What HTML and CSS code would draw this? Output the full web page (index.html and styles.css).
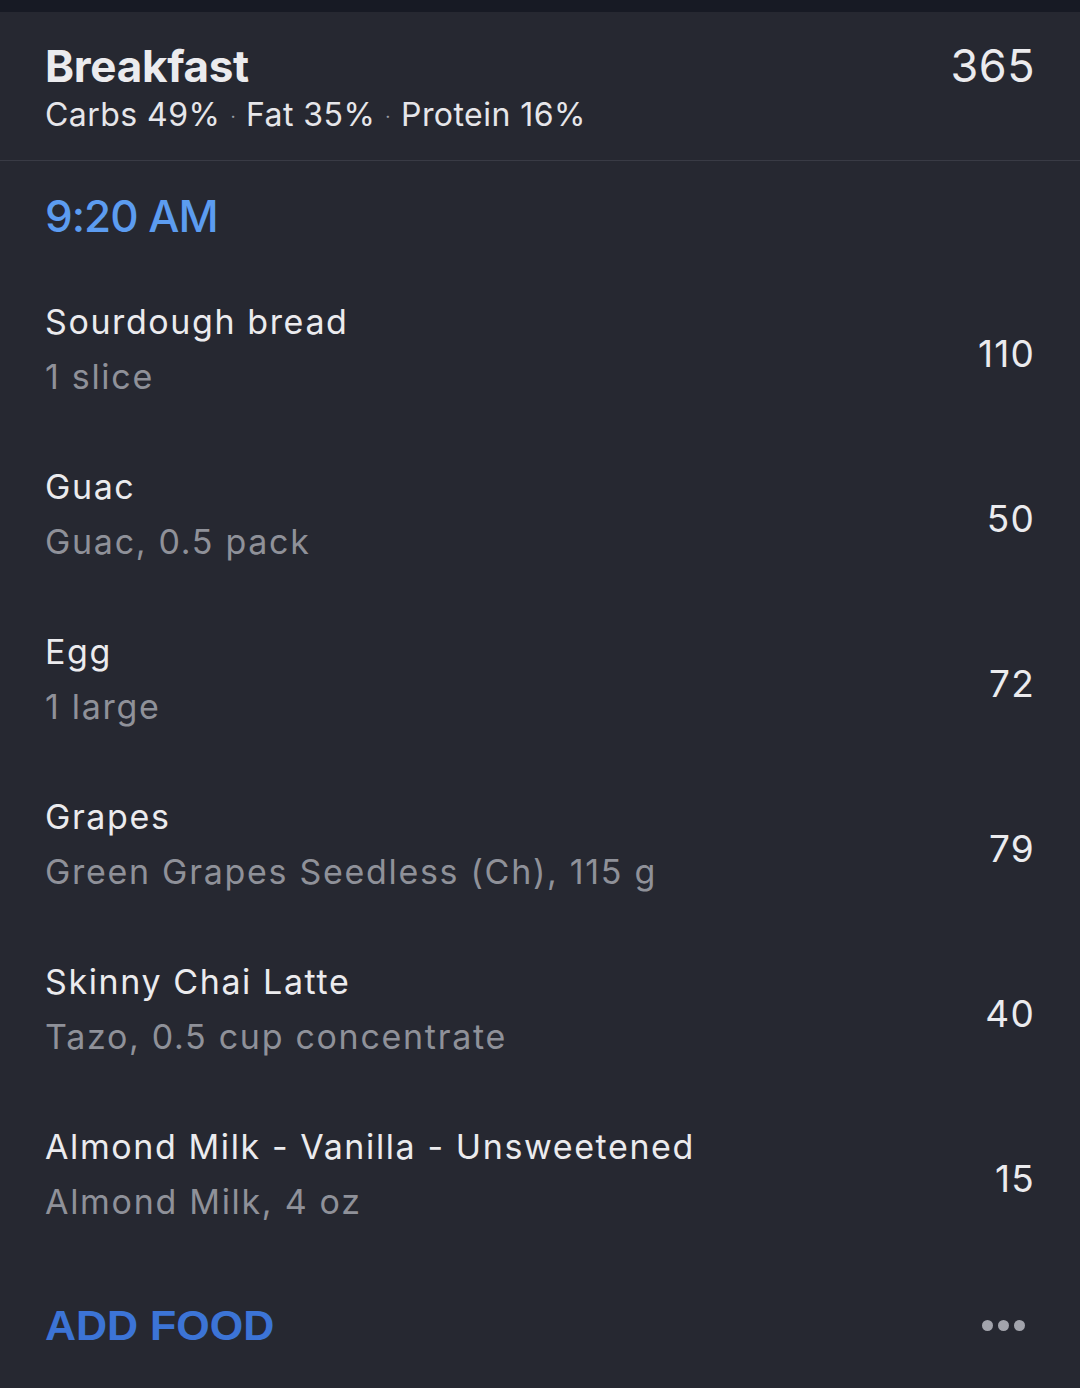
FILE: index.html
```html
<!DOCTYPE html>
<html>
<head>
<meta charset="utf-8">
<link rel="stylesheet" href="styles.css">
</head>
<body>
<div class="topbar"></div>
<header class="meal-header">
  <div class="meal-info">
    <div class="meal-title">Breakfast</div>
    <div class="macros">Carbs 49%<span class="sep">·</span>Fat 35%<span class="sep">·</span>Protein 16%</div>
  </div>
  <div class="meal-total">365</div>
</header>
<section class="time-block">
  <div class="time">9:20 AM</div>
</section>
<ul class="food-list">
  <li class="food"><div class="food-text"><div class="food-name">Sourdough bread</div><div class="food-desc">1 slice</div></div><div class="food-cal">110</div></li>
  <li class="food"><div class="food-text"><div class="food-name">Guac</div><div class="food-desc">Guac, 0.5 pack</div></div><div class="food-cal">50</div></li>
  <li class="food"><div class="food-text"><div class="food-name">Egg</div><div class="food-desc">1 large</div></div><div class="food-cal">72</div></li>
  <li class="food"><div class="food-text"><div class="food-name">Grapes</div><div class="food-desc">Green Grapes Seedless (Ch), 115 g</div></div><div class="food-cal">79</div></li>
  <li class="food"><div class="food-text"><div class="food-name">Skinny Chai Latte</div><div class="food-desc">Tazo, 0.5 cup concentrate</div></div><div class="food-cal">40</div></li>
  <li class="food"><div class="food-text"><div class="food-name">Almond Milk - Vanilla - Unsweetened</div><div class="food-desc">Almond Milk, 4 oz</div></div><div class="food-cal">15</div></li>
</ul>
<footer class="meal-footer">
  <div class="add-food">ADD FOOD</div>
  <div class="more"><span class="dot"></span><span class="dot"></span><span class="dot"></span></div>
</footer>
</body>
</html>
```
FILE: styles.css
```css
html, body {
  margin: 0;
  padding: 0;
}
body {
  width: 1080px;
  height: 1388px;
  overflow: hidden;
  background: #262831;
  font-family: Inter, "Noto Sans", sans-serif;
  color: #ebebee;
}
.topbar {
  height: 12px;
  background: #171a24;
}
.meal-header {
  display: flex;
  justify-content: space-between;
  align-items: flex-start;
  padding: 28px 45px 20px 45px;
  border-bottom: 1px solid #393b45;
}
.meal-title {
  font-size: 44px;
  font-weight: 700;
  line-height: 52px;
  letter-spacing: -0.3px;
}
.macros {
  font-size: 32px;
  line-height: 46px;
  letter-spacing: 0.45px;
  color: #e6e6ea;
}
.sep {
  font-size: 18px;
  color: #9a9ca4;
  margin: 0 10px;
  vertical-align: 3px;
}
.meal-total {
  font-size: 45px;
  line-height: 52px;
  font-weight: 400;
  letter-spacing: 0.5px;
}
.time-block {
  padding: 25px 45px 24px;
}
.time {
  font-size: 44px;
  line-height: 60px;
  color: #5c9cf0;
  font-weight: 500;
  letter-spacing: -1px;
}
.food-list {
  list-style: none;
  margin: 0;
  padding: 0;
}
.food {
  height: 165px;
  display: flex;
  align-items: center;
  justify-content: space-between;
  padding: 0 45px 0 45px;
}
.food-text {
  margin-top: -8px;
}
.food-name {
  font-size: 34px;
  line-height: 55px;
  letter-spacing: 1.6px;
}
.food-desc {
  font-size: 34px;
  line-height: 55px;
  letter-spacing: 1.7px;
  color: #8f9199;
}
.food-cal {
  font-size: 37px;
  letter-spacing: 1.2px;
  margin-top: 2px;
}
.meal-footer {
  display: flex;
  justify-content: space-between;
  align-items: center;
  padding: 32px 55px 0 45px;
}
.add-food {
  font-family: "Liberation Sans", Arial, sans-serif;
  font-weight: 700;
  font-size: 43px;
  line-height: 66px;
  color: #3c74d6;
}
.more {
  display: flex;
  gap: 5px;
}
.dot {
  width: 11px;
  height: 11px;
  border-radius: 50%;
  background: #a2a4ac;
}
```
